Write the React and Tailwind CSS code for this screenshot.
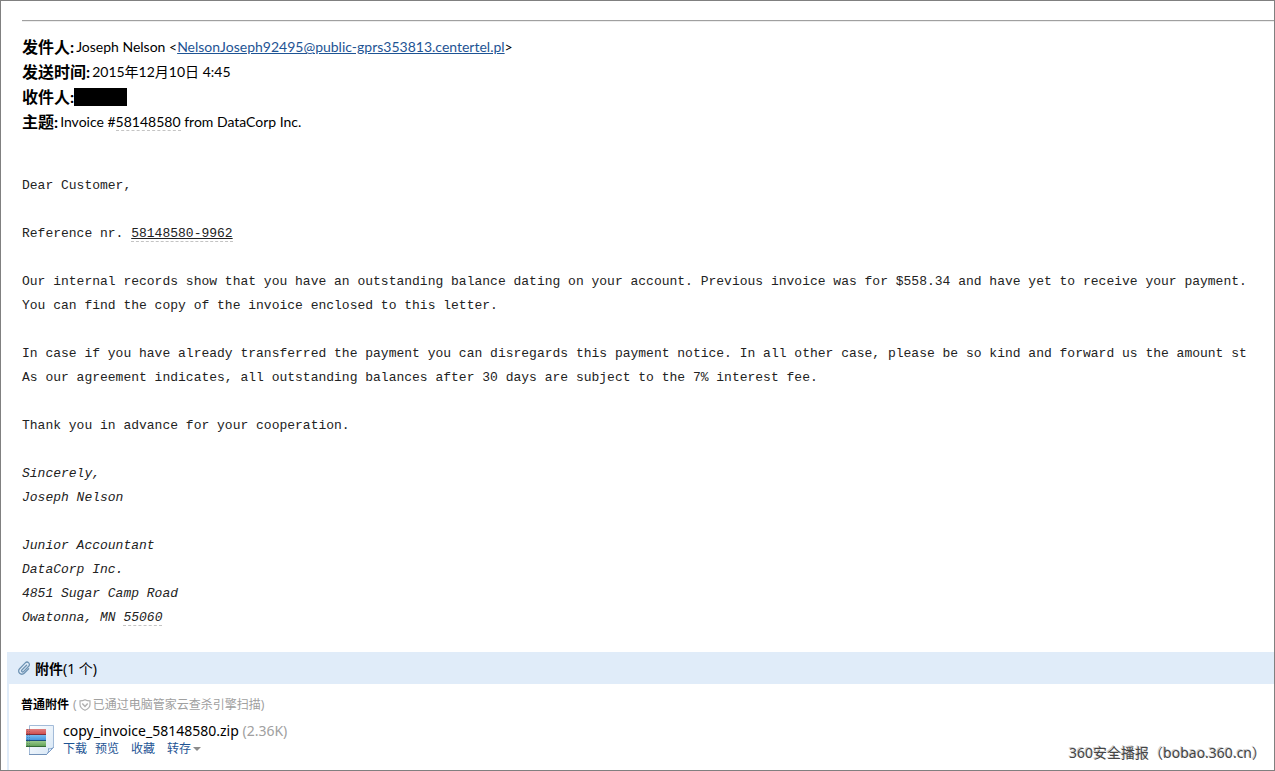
import React from "react";

function Dashed({ children, className = "" }) {
  return (
    <span className={`border-b border-dashed border-[#c4c4c4] ${className}`}>
      {children}
    </span>
  );
}

function Field({ label, children }) {
  return (
    <div className="flex items-center gap-0.5">
      <dt className="text-[16px] font-bold">{label}:</dt>
      <dd>{children}</dd>
    </div>
  );
}

function PaperclipIcon() {
  return (
    <svg width="14" height="14" viewBox="0 0 14 14" fill="none" strokeLinecap="round" strokeLinejoin="round" aria-hidden="true">
      <path d="M9.6 4.2 4.900 9a1.100 1.100 0 0 0 1.600 1.600l5.200-5.300a2.300 2.300 0 0 0-3.400-3.400L2.600 7.700a3.200 3.200 0 0 0 4.600 4.600l4.400-4.500" stroke="#6f94b4" strokeWidth="1.300" />
    </svg>
  );
}

function ShieldIcon() {
  return (
    <svg width="12" height="12" viewBox="0 0 12 12" fill="none" stroke="#b0b0b0" strokeWidth="1.2" aria-hidden="true">
      <path d="M6 .8C4.5 1.6 3 1.9 1 1.9v3.6C1 8.200 3 10 6 11.300 9 10 11 8.200 11 5.500V1.900C9 1.900 7.500 1.600 6 .8Z" />
      <path d="M3.300 4.600 6 7.400 8.700 4.600" strokeWidth="1.500" />
    </svg>
  );
}

function ArchiveIcon() {
  return (
    <svg width="30" height="32" viewBox="0 0 30 32" aria-hidden="true">
      <defs>
        <linearGradient id="page" x1="0" y1="0" x2="1" y2="1">
          <stop offset="0" stopColor="#ffffff" />
          <stop offset="1" stopColor="#d6e6f5" />
        </linearGradient>
        <linearGradient id="red" x1="0" y1="0" x2="0" y2="1">
          <stop offset="0" stopColor="#e08080" />
          <stop offset="1" stopColor="#d05050" />
        </linearGradient>
        <linearGradient id="blue" x1="0" y1="0" x2="0" y2="1">
          <stop offset="0" stopColor="#78bdf0" />
          <stop offset="1" stopColor="#4795dc" />
        </linearGradient>
        <linearGradient id="green" x1="0" y1="0" x2="0" y2="1">
          <stop offset="0" stopColor="#9aca8c" />
          <stop offset="1" stopColor="#64a45a" />
        </linearGradient>
      </defs>
      <path d="M4.500 1.500h24v22l-7 7h-17Z" fill="url(#page)" stroke="#a3bbd8" />
      <path d="M4 30.500h18" stroke="#7392b8" />
      <path d="M28.500 23.500c-2 1.500-3.500 1.500-5 1 .5 2.500-.2 4.500-2 6Z" fill="#f4f9fe" stroke="#7c9dc8" />
      <rect x="1" y="5" width="20" height="5" fill="url(#red)" />
      <rect x="1" y="10" width="20" height="1" fill="#7c2f3c" />
      <rect x="1" y="11" width="20" height="5" fill="url(#blue)" />
      <rect x="1" y="16" width="20" height="1" fill="#1c4f80" />
      <rect x="1" y="17" width="20" height="5" fill="url(#green)" />
      <rect x="1" y="22" width="20" height="1" fill="#356a35" />
      <path d="M2.500 5v18M4.500 5v18" stroke="#20405a" strokeOpacity=".3" strokeDasharray="1 1" />
    </svg>
  );
}

const actionClass = "text-[#1e5494]";

export default function App() {
  return (
    <div className="relative flex min-h-screen flex-col overflow-hidden border border-[#808080] bg-white font-['Lato','Noto_Sans_CJK_SC',sans-serif] text-black">
      <hr className="mt-[19px] ml-[21px] h-[2px] border-t border-b border-t-[#a0a0a0] border-b-[#eeeeee]" />

      <dl className="mt-3 ml-[21px] text-[14px] leading-[25px]">
        <Field label="发件人">
          Joseph Nelson &lt;
          <a href="mailto:NelsonJoseph92495@public-gprs353813.centertel.pl" className="text-[#1e5494] underline">
            NelsonJoseph92495@public-gprs353813.centertel.pl
          </a>
          &gt;
        </Field>
        <Field label="发送时间">2015年12月10日 4:45</Field>
        <div className="flex items-center">
          <dt className="text-[16px] font-bold">收件人:</dt>
          <dd className="h-[18px] w-[53px] bg-black" />
        </div>
        <Field label="主题">
          Invoice #<Dashed>58148580</Dashed> from DataCorp Inc.
        </Field>
      </dl>

      <div className="mt-10 ml-[21px] flex flex-col gap-6 font-['Liberation_Mono',monospace] text-[13px] leading-6 whitespace-nowrap text-[#222]">
        <p>Dear Customer,</p>
        <p>
          Reference nr. <Dashed className="underline">58148580-9962</Dashed>
        </p>
        <p>
          Our internal records show that you have an outstanding balance dating on your account. Previous invoice was for $558.34 and have yet to receive your payment.
          <br />
          You can find the copy of the invoice enclosed to this letter.
        </p>
        <p>
          In case if you have already transferred the payment you can disregards this payment notice. In all other case, please be so kind and forward us the amount st
          <br />
          As our agreement indicates, all outstanding balances after 30 days are subject to the 7% interest fee.
        </p>
        <p>Thank you in advance for your cooperation.</p>
        <p className="italic">
          Sincerely,
          <br />
          Joseph Nelson
        </p>
        <p className="italic">
          Junior Accountant
          <br />
          DataCorp Inc.
          <br />
          4851 Sugar Camp Road
          <br />
          Owatonna, MN <Dashed>55060</Dashed>
        </p>
      </div>

      <section className="mt-[22px] ml-1.5 flex grow flex-col font-['Noto_Sans','Noto_Sans_CJK_SC',sans-serif]">
        <h2 className="flex h-8 items-center gap-1 bg-[#e0ecf9] pl-2.5 text-[14px]">
          <PaperclipIcon />
          <span>
            <b>附件</b>(1 个)
          </span>
        </h2>
        <div className="grow border-l-2 border-[#e0ecf9] pt-3 pl-3 text-[12px] leading-[18px]">
          <p className="flex items-center gap-1 text-[#a0a0a0]">
            <b className="text-black">普通附件</b>
            <span className="flex items-center gap-0.5">
              <span>(</span>
              <ShieldIcon />
              <span>已通过电脑管家云查杀引擎扫描)</span>
            </span>
          </p>
          <div className="mt-2 flex items-center gap-2 pb-1 pl-1">
            <ArchiveIcon />
            <div>
              <p className="text-[14px]">
                copy_invoice_58148580.zip <span className="text-[#a0a0a0]">(2.36K)</span>
              </p>
              <div className="flex">
                <a href="#download" className={`mr-2 ${actionClass}`}>下载</a>
                <a href="#preview" className={`mr-3 ${actionClass}`}>预览</a>
                <a href="#favorite" className={`mr-3 ${actionClass}`}>收藏</a>
                <button type="button" className={`flex items-center gap-0.5 ${actionClass}`}>
                  转存
                  <svg width="8" height="4" viewBox="0 0 8 4" fill="#8c8c8c" aria-hidden="true">
                    <path d="M0 0h8L4 4Z" />
                  </svg>
                </button>
              </div>
            </div>
          </div>
        </div>
      </section>

      <div className="absolute right-2 bottom-2 font-['Noto_Sans','Noto_Sans_CJK_SC',sans-serif] text-[14px] leading-[18px] text-[#444] [text-shadow:-1px_-1px_0_#ccc]">
        360安全播报（bobao.360.cn）
      </div>
    </div>
  );
}
